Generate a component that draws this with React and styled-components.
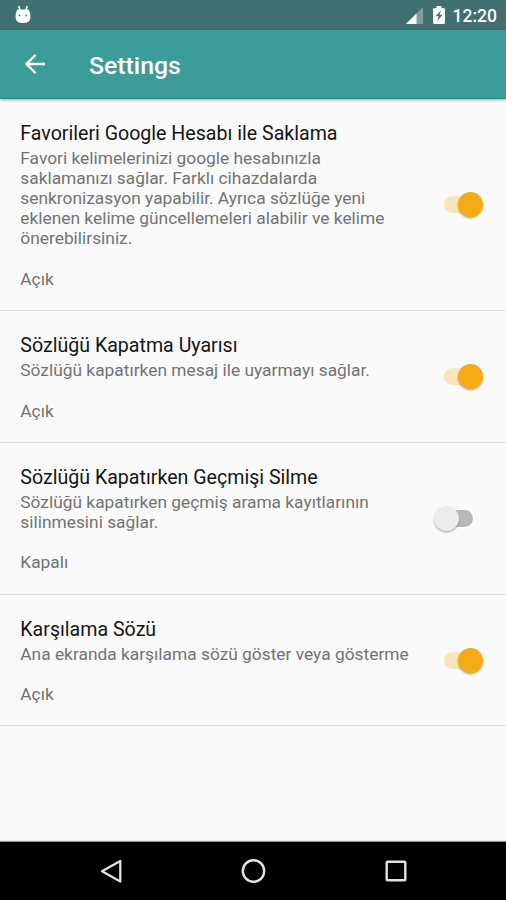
import React from "react";
import styled, { createGlobalStyle } from "styled-components";

const GlobalStyle = createGlobalStyle`
  * { box-sizing: border-box; }
  html, body { margin: 0; background: #fafafa; }
  body { font-family: Roboto, sans-serif; overflow: hidden; }
`;

const Screen = styled.div`
  width: 506px;
  height: 900px;
  display: flex;
  flex-direction: column;
  background: #fafafa;
`;

const StatusBar = styled.header`
  height: 30px;
  flex: none;
  display: flex;
  align-items: center;
  justify-content: space-between;
  padding: 0 9px 0 14px;
  background: #40706f;
`;

const StatusIcons = styled.div`
  display: flex;
  align-items: center;
`;

const SignalIcon = styled.svg`
  margin-right: 10px;
`;

const BatteryIcon = styled.svg`
  margin-right: 8px;
`;

const Clock = styled.span`
  font-size: 17.5px;
  font-weight: 500;
  line-height: 30px;
  color: #fff;
  padding-top: 2px;
`;

const Toolbar = styled.div`
  height: 68.6px;
  flex: none;
  display: flex;
  align-items: center;
  padding-left: 25px;
  background: #3c9c9a;
  border-bottom: 1px solid #1c918f;
  box-shadow: 0 1px 3px rgba(0, 0, 0, 0.35);
`;

const BackButton = styled.button`
  display: flex;
  padding: 1px 0 0;
  border: 0;
  background: none;
  margin-right: 44px;
`;

const ToolbarTitle = styled.h1`
  margin: 5px 0 0;
  font-size: 24.8px;
  font-weight: 500;
  line-height: 30px;
  color: #fff;
`;

const SettingsList = styled.main`
  flex: 1;
  min-height: 0;
`;

const SettingRow = styled.section`
  display: flex;
  justify-content: space-between;
  align-items: center;
  padding: 23px 20px 21.1px 20.3px;
  border-bottom: 1px solid #dedede;
`;

const SettingText = styled.div`
  width: 394px;
`;

const SettingTitle = styled.h2`
  margin: 0 0 2px;
  font-size: 19.6px;
  font-weight: 400;
  line-height: 24px;
  color: #151515;
  white-space: nowrap;
`;

const Summary = styled.p`
  margin: 0;
  font-size: 17.35px;
  line-height: 20.2px;
  color: #737373;
  white-space: pre;
`;

const Switch = styled.button`
  width: ${(p) => (p.$on ? "40px" : "50px")};
  height: 28px;
  flex: none;
  display: flex;
  align-items: center;
  justify-content: ${(p) => (p.$on ? "flex-end" : "flex-start")};
  margin-right: ${(p) => (p.$on ? "4px" : "2px")};
  margin-bottom: 2px;
  padding: 0;
  border: 0;
  background: none;
`;

const Track = styled.span`
  display: flex;
  align-items: center;
  justify-content: ${(p) => (p.$on ? "flex-end" : "flex-start")};
  width: 29px;
  height: 17px;
  margin-right: ${(p) => (p.$on ? "9px" : "0")};
  margin-left: ${(p) => (p.$on ? "0" : "10px")};
  border-radius: 9px;
  background: ${(p) => (p.$on ? "#fce5b9" : "#b8b8b8")};
`;

const Thumb = styled.span`
  flex: none;
  width: 25px;
  height: 25px;
  margin: ${(p) => (p.$on ? "0 -9.5px 0 0" : "0 0 0 -10px")};
  border-radius: 50%;
  background: ${(p) => (p.$on ? "#f5ab15" : "#ececec")};
  box-shadow: 0 1.5px 2px rgba(0, 0, 0, 0.28);
`;

const NavigationBar = styled.nav`
  height: 58px;
  flex: none;
  display: flex;
  justify-content: space-between;
  align-items: center;
  padding: 0 95px 0 97px;
  background: #000;
  box-shadow: 0 -1px 1px rgba(0, 0, 0, 0.4);
`;

const settings = [
  {
    title: "Favorileri Google Hesabı ile Saklama",
    lines: [
      "Favori kelimelerinizi google hesabınızla",
      "saklamanızı sağlar. Farklı cihazdalarda",
      "senkronizasyon yapabilir. Ayrıca sözlüğe yeni",
      "eklenen kelime güncellemeleri alabilir ve kelime",
      "önerebilirsiniz.",
    ],
    on: true,
  },
  {
    title: "Sözlüğü Kapatma Uyarısı",
    lines: ["Sözlüğü kapatırken mesaj ile uyarmayı sağlar."],
    on: true,
  },
  {
    title: "Sözlüğü Kapatırken Geçmişi Silme",
    lines: ["Sözlüğü kapatırken geçmiş arama kayıtlarının", "silinmesini sağlar."],
    on: false,
  },
  {
    title: "Karşılama Sözü",
    lines: ["Ana ekranda karşılama sözü göster veya gösterme"],
    on: true,
  },
];

function Setting({ title, lines, on }) {
  return (
    <SettingRow>
      <SettingText>
        <SettingTitle>{title}</SettingTitle>
        <Summary>{[...lines, "", on ? "Açık" : "Kapalı"].join("\n")}</Summary>
      </SettingText>
      <Switch $on={on} role="switch" aria-checked={on} aria-label={title}>
        <Track $on={on}>
          <Thumb $on={on} />
        </Track>
      </Switch>
    </SettingRow>
  );
}

export default function App() {
  return (
    <>
      <GlobalStyle />
      <Screen>
        <StatusBar>
          <svg width="18" height="20" viewBox="0 0 18 20">
            <path
              d="M5 1.500 5.900 5M13 1.500 12.100 5"
              stroke="#e9f5f4"
              strokeWidth="1.7"
              strokeLinecap="round"
            />
            <path d="M3.300 4.500h11.400q1.800 3 1.800 7.500 0 6-7.500 6t-7.500-6Q1.500 7.500 3.300 4.500Z" fill="#fff" />
            <circle cx="5.500" cy="10.500" r="0.900" fill="#40706f" />
            <circle cx="12.300" cy="10.500" r="0.900" fill="#40706f" />
          </svg>
          <StatusIcons>
            <SignalIcon width="17" height="17" viewBox="0 0 17 17">
              <path d="M17 0v17H0Z" fill="#809d9b" />
              <path d="M10.500 6.500V17H0Z" fill="#fff" />
            </SignalIcon>
            <BatteryIcon width="12" height="18" viewBox="0 0 12 18">
              <path
                d="M3.500 0h5v2h2Q12 2 12 3.500v13Q12 18 10.500 18h-9Q0 18 0 16.500v-13Q0 2 1.500 2h2Z"
                fill="#fff"
              />
              <path d="M8 4.200 2.700 10.300h3L4.300 15.300l5.200-6.600H6.500Z" fill="#40706f" />
            </BatteryIcon>
            <Clock>12:20</Clock>
          </StatusIcons>
        </StatusBar>
        <Toolbar>
          <BackButton aria-label="Back">
            <svg width="20" height="20" viewBox="0 0 20 20" fill="none">
              <path d="M10.500 1 1.500 10l9 9M1.500 10H20" stroke="#fff" strokeWidth="2.300" />
            </svg>
          </BackButton>
          <ToolbarTitle>Settings</ToolbarTitle>
        </Toolbar>
        <SettingsList>
          {settings.map((s) => (
            <Setting key={s.title} {...s} />
          ))}
        </SettingsList>
        <NavigationBar>
          <svg width="30" height="30" viewBox="0 0 30 30" fill="none">
            <path
              d="M23.300 5 5 15.200l18.300 10.300Z"
              stroke="#e2e2e2"
              strokeWidth="2.300"
              strokeLinejoin="round"
            />
          </svg>
          <svg width="30" height="30" viewBox="0 0 30 30" fill="none">
            <circle cx="14.500" cy="15" r="10.700" stroke="#e2e2e2" strokeWidth="2.400" />
          </svg>
          <svg width="30" height="30" viewBox="0 0 30 30" fill="none">
            <rect x="5.700" y="5.700" width="18.600" height="18.600" rx="0.800" stroke="#e2e2e2" strokeWidth="2.400" />
          </svg>
        </NavigationBar>
      </Screen>
    </>
  );
}
